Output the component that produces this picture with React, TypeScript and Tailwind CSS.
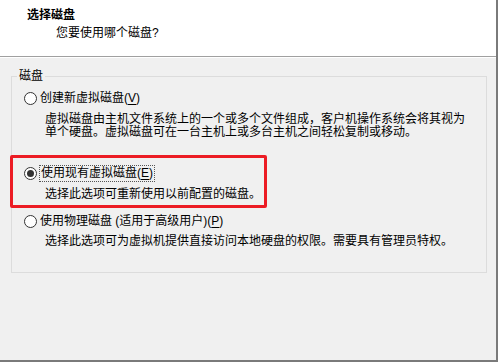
function Radio({ checked }: { checked?: boolean }) {
  return (
    <span className="w-[13px] h-[13px] rounded-full border border-[#333333] bg-white flex items-center justify-center shrink-0">
      {checked && <span className="w-[7px] h-[7px] rounded-full bg-[#333333]" />}
    </span>
  );
}

function Key({ k }: { k: string }) {
  return (
    <>
      (<span className="underline underline-offset-2">{k}</span>)
    </>
  );
}

export default function App() {
  return (
    <div className="relative w-[498px] h-[362px] bg-[#f0f0f0] border-r-2 border-b-2 border-[#7a7a7a] text-[12px] text-black font-['Liberation_Sans','Noto_Sans_CJK_SC',sans-serif] overflow-hidden">
      <div className="h-[56px] bg-white pl-[27px] pt-[8px]">
        <div className="font-bold leading-[15px]">选择磁盘</div>
        <div className="pl-[29px] mt-[3px] leading-[15px]">您要使用哪个磁盘?</div>
      </div>
      <div className="h-px bg-[#a0a0a0]" />
      <div className="h-px bg-white" />

      <div className="relative ml-[11px] mt-[18px] w-[476px] h-[197px] border border-[#dcdcdc] pl-[12px] pt-[14px]">
        <span className="absolute -top-[8px] left-[5px] px-[2px] bg-[#f0f0f0] leading-[15px]">磁盘</span>

        <div className="flex items-center gap-[3px] leading-[15px]">
          <Radio />
          <span>创建新虚拟磁盘<Key k="V" /></span>
        </div>
        <div className="pl-[21px] mt-[7px] leading-[13px]">
          <div>虚拟磁盘由主机文件系统上的一个或多个文件组成，客户机操作系统会将其视为</div>
          <div>单个硬盘。虚拟磁盘可在一台主机上或多台主机之间轻松复制或移动。</div>
        </div>

        <div className="flex items-center gap-[3px] leading-[15px] mt-[27px]">
          <Radio checked />
          <span className="outline outline-1 outline-dotted outline-[#555555] px-px">使用现有虚拟磁盘<Key k="E" /></span>
        </div>
        <div className="pl-[21px] mt-[7px] leading-[13px]">选择此选项可重新使用以前配置的磁盘。</div>

        <div className="flex items-center gap-[3px] leading-[15px] mt-[13px]">
          <Radio />
          <span>使用物理磁盘 (适用于高级用户)<Key k="P" /></span>
        </div>
        <div className="pl-[21px] mt-[6px] leading-[13px]">选择此选项可为虚拟机提供直接访问本地硬盘的权限。需要具有管理员特权。</div>
      </div>

      <div className="absolute left-[10px] top-[155px] w-[257px] h-[53px] border-[3px] border-[#ec1c24] rounded-[2px]" />
    </div>
  );
}
